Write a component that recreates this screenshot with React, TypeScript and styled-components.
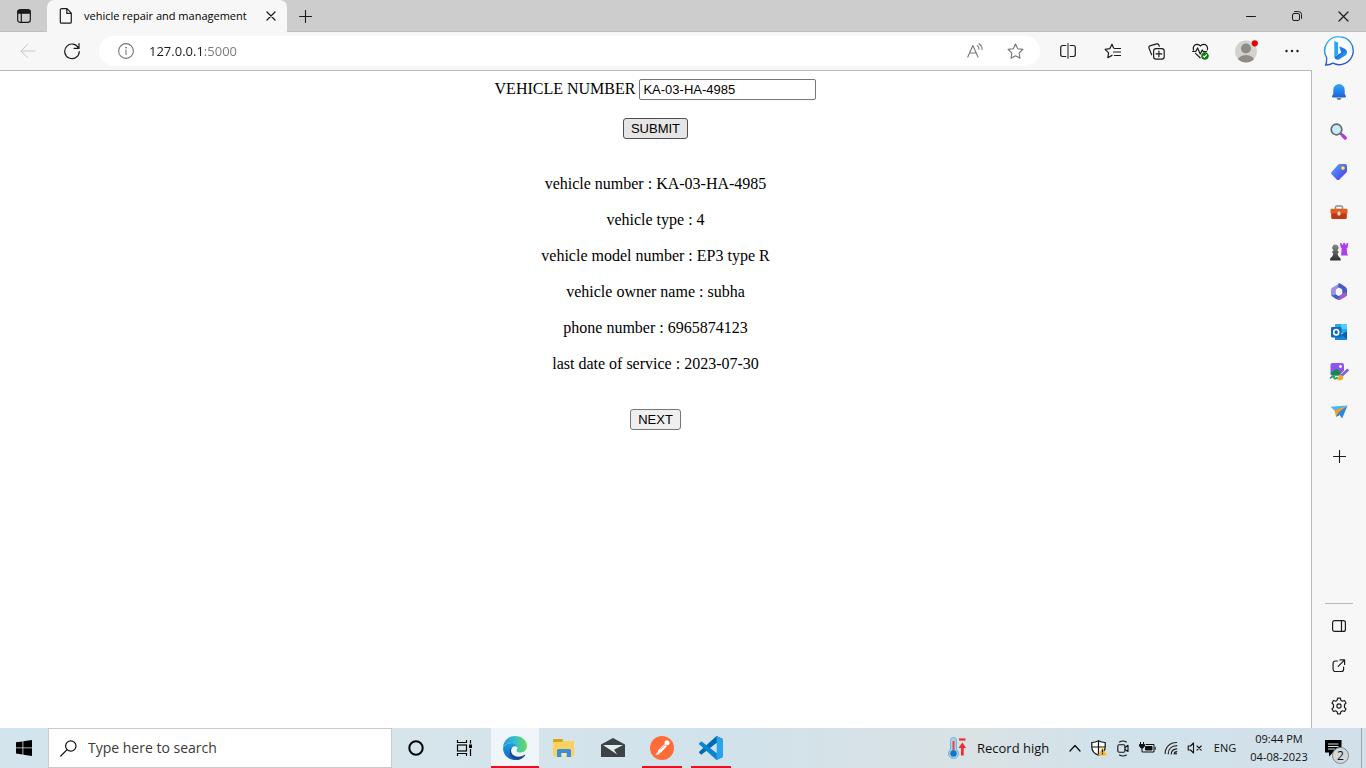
import React from "react";
import styled, { createGlobalStyle, css } from "styled-components";

const UI_FONT = '"Open Sans", "Noto Sans", sans-serif';

const GlobalStyle = createGlobalStyle`
  *, *::before, *::after { box-sizing: border-box; }
  body { margin: 0; background: #fff; color: #000; }
  button, input { margin: 0; }
  svg { display: block; flex: none; }
`;

const Desktop = styled.div`
  display: flex;
  flex-direction: column;
  min-height: 100vh;
  font-family: ${UI_FONT};
`;

/* ---------- browser chrome ---------- */

const TitleBar = styled.header`
  display: flex;
  height: 32px;
  background: #cdcdcd;
  box-shadow: inset 0 -1px 0 #bebebe;
`;

const BareButton = styled.button<{ $w: number }>`
  display: flex;
  flex: none;
  align-items: center;
  justify-content: center;
  width: ${(p) => p.$w}px;
  padding: 0;
  border: 0;
  background: transparent;
  color: #1b1b1b;
`;

const Tab = styled.div`
  display: flex;
  align-items: center;
  width: 240px;
  padding-left: 12px;
  border-radius: 7px 7px 0 0;
  background: #f7f7f7;
`;

const TabTitle = styled.span`
  flex: 1;
  padding-left: 11px;
  font-size: 11px;
  line-height: 16px;
  white-space: nowrap;
`;

const WindowControls = styled.div`
  display: flex;
  margin-left: auto;
`;

const Toolbar = styled.div`
  display: flex;
  align-items: stretch;
  height: 38px;
  padding: 0 2px 0 6px;
  background: #f7f7f7;
`;

const AddressPill = styled.div`
  display: flex;
  flex: 1;
  align-self: center;
  height: 30px;
  margin: 0 6px 0 5px;
  padding: 0 5px 0 7px;
  border-radius: 15px;
  background: #fff;
`;

const AddressInput = styled.input`
  flex: 1;
  min-width: 0;
  padding: 0 0 0 3px;
  border: 0;
  outline: 0;
  font: 13px/20px ${UI_FONT};
  color: #1b1b1b;
  background: linear-gradient(to right, #1b1b1b 56px, #767676 56px);
  background-clip: text;
  -webkit-background-clip: text;
  -webkit-text-fill-color: transparent;
`;

const Body = styled.div`
  display: flex;
  flex: 1;
`;

const Sidebar = styled.aside`
  display: flex;
  flex-direction: column;
  align-items: center;
  width: 54px;
  padding: 2px 0;
  background: #f7f7f7;
`;

const SideButton = styled.button<{ $gap?: boolean }>`
  display: flex;
  align-items: center;
  justify-content: center;
  width: 40px;
  height: 40px;
  margin-top: ${(p) => (p.$gap ? 4 : 0)}px;
  padding: 0;
  border: 0;
  background: transparent;
  color: #1b1b1b;
`;

const SideDivider = styled.hr`
  width: 28px;
  margin: auto 0 2px;
  border: 0;
  border-top: 1px solid #b9b9b9;
`;

/* ---------- web page ---------- */

const Page = styled.main`
  display: flex;
  flex: 1;
  flex-direction: column;
  align-items: center;
  padding: 8px;
  border: solid #b9b9b9;
  border-width: 1px 1px 0 0;
  background: #fff;
  font: 16px/18px "Liberation Serif", serif;
`;

const LookupForm = styled.form`
  display: flex;
  flex-direction: column;
  align-items: center;
  gap: 18px;
`;

const Field = styled.label`
  display: flex;
  align-items: baseline;
  gap: 4px;
`;

const VehicleInput = styled.input`
  width: 177px;
  height: 21px;
  padding: 1px 3px;
  border: 1px solid #767676;
  border-radius: 2px;
  background: #fff;
  color: #000;
  font: 13px/15px "Liberation Sans", sans-serif;
`;

const FormButton = styled.button<{ $hover?: boolean }>`
  height: 21px;
  padding: 0 7px;
  border: 1px solid ${(p) => (p.$hover ? "#4f4f4f" : "#767676")};
  border-radius: 3px;
  background: ${(p) => (p.$hover ? "#e5e5e5" : "#efefef")};
  color: #000;
  font: 13px/15px "Liberation Sans", sans-serif;
`;

const Details = styled.div`
  display: flex;
  flex-direction: column;
  gap: 18px;
  margin: 36px 0;
  text-align: center;
`;

const Detail = styled.p`
  margin: 0;
`;

/* ---------- taskbar ---------- */

const Taskbar = styled.footer`
  display: flex;
  height: 40px;
  background: linear-gradient(to right, #d4e4ed, #d6e5ec 30%, #d2e2ea 55%, #dae2e4 72%, #d2e2ea 80%, #d2e1e9);
`;

const SearchBox = styled.label`
  display: flex;
  align-items: center;
  gap: 11px;
  width: 344px;
  padding-left: 11px;
  border: 1px solid #c8cccf;
  background: #fff;
`;

const SearchInput = styled.input`
  flex: 1;
  min-width: 0;
  padding: 0;
  border: 0;
  outline: 0;
  background: transparent;
  font: 14px/20px ${UI_FONT};
  &::placeholder { color: #3a3a3a; opacity: 1; }
`;

const AppButton = styled.button<{ $state?: "active" | "running" }>`
  display: flex;
  align-items: center;
  justify-content: center;
  width: 48px;
  padding: 0;
  border: 0;
  background: transparent;
  ${(p) =>
    p.$state === "active" &&
    css`
      background: linear-gradient(#e81123, #e81123) bottom / 100% 2px no-repeat #eff5f8;
    `}
  ${(p) =>
    p.$state === "running" &&
    css`
      background: linear-gradient(#e81123, #e81123) bottom / 40px 2px no-repeat;
    `}
`;

const PinnedApps = styled.nav`
  display: flex;
  gap: 1px;
  margin-left: 3px;
`;

const Tray = styled.div`
  display: flex;
  align-items: stretch;
  margin-left: auto;
`;

const Weather = styled.button`
  display: flex;
  align-items: center;
  gap: 10px;
  width: 116px;
  padding: 0;
  border: 0;
  background: transparent;
  color: #111;
  font: 13px/20px ${UI_FONT};
  white-space: nowrap;
`;

const TrayText = styled.button<{ $w: number }>`
  width: ${(p) => p.$w}px;
  padding: 0;
  border: 0;
  background: transparent;
  color: #111;
  font: 11px/18px ${UI_FONT};
  white-space: nowrap;
`;

const ClockLine = styled.time`
  display: block;
`;

const Notifications = styled.button`
  position: relative;
  display: flex;
  align-items: center;
  width: 46px;
  padding: 0 0 0 10px;
  border: 0;
  background: transparent;
`;

const Badge = styled.span`
  position: absolute;
  right: 12px;
  bottom: 4px;
  width: 17px;
  height: 17px;
  border: 1px solid #7d8488;
  border-radius: 50%;
  background: #d3d8db;
  color: #111;
  font: 12px/15px ${UI_FONT};
  text-align: center;
`;

const ShowDesktop = styled.button`
  width: 5px;
  padding: 0;
  border: 0;
  border-left: 1px solid #9daab1;
  background: transparent;
`;

/* ---------- icons ---------- */

type IconProps = { w?: number; h?: number; sw?: number; color?: string; children: React.ReactNode };

const Line = ({ w = 16, h = 16, sw = 1, color = "#1b1b1b", children }: IconProps) => (
  <svg width={w} height={h} viewBox={`0 0 ${w} ${h}`} fill="none" stroke={color} strokeWidth={sw}
    strokeLinecap="round" strokeLinejoin="round" aria-hidden="true">
    {children}
  </svg>
);

const TabActionsIcon = () => (
  <Line w={14} h={14} sw={1.2}>
    <rect x="0.7" y="0.7" width="12.6" height="12.6" rx="2.4" />
    <path d="M1 1.6h12v2.6H1z" fill="#1b1b1b" />
    <path d="M4.3 4v9" />
  </Line>
);
const FileIcon = () => (
  <Line w={14} h={16} sw={1.2}>
    <path d="M2.6.7H8l4.3 4.4v8.8a1.3 1.3 0 0 1-1.3 1.3H2.6a1.3 1.3 0 0 1-1.3-1.3V2A1.3 1.3 0 0 1 2.6.7zM7.8.9v4.4h4.4" />
  </Line>
);
const CloseIcon = ({ s = 10 }: { s?: number }) => (
  <Line w={s} h={s} sw={1.2}><path d={`M1 1l${s - 2} ${s - 2}M${s - 1} 1L1 ${s - 1}`} /></Line>
);
const PlusIcon = ({ s = 13 }: { s?: number }) => (
  <Line w={s} h={s} sw={1.1}><path d={`M${s / 2} .5v${s - 1}M.5 ${s / 2}h${s - 1}`} /></Line>
);
const MinimizeIcon = () => <Line w={10} h={10}><path d="M.5 5.5h9" /></Line>;
const RestoreIcon = () => (
  <Line w={10} h={10}>
    <rect x=".5" y="2.5" width="7" height="7" rx="1.5" />
    <path d="M2.5.6h4.2A2.8 2.8 0 0 1 9.5 3.4v4" />
  </Line>
);
const BackIcon = () => <Line color="#c6c6c6"><path d="M15 8H1M7.5 1.500L1 8l6.500 6.500" /></Line>;
const ReloadIcon = () => (
  <Line w={18} h={18} sw={1.2}><path d="M15.600 6.200A7.300 7.300 0 1 0 16.300 9.500M16 1.500v4.900h-4.900" /></Line>
);
const InfoIcon = () => (
  <Line w={18} h={18} sw={1.1} color="#767676">
    <circle cx="9" cy="9" r="7.400" /><path d="M9 8v4.500" /><circle cx="9" cy="5.600" r=".4" fill="#767676" />
  </Line>
);
const ReadAloudIcon = () => (
  <Line w={16} h={16} sw={1.1} color="#767676">
    <path d="M.800 14L5.900 2.500 11 14M2.600 10h6.600M10.300 2.600c1.200.9 1.700 2.100 1.600 3.700M12 .800c2.100 1.400 3.100 3.400 3.100 5.700" />
  </Line>
);
const STAR = "M8.500 1l2.200 4.700 5.200.7-3.800 3.600.9 5.200-4.500-2.500L4 15.200l.9-5.200L1.100 6.400l5.200-.7z";
const StarIcon = () => <Line w={17} h={17} sw={1.1} color="#767676"><path d={STAR} /></Line>;
const SplitIcon = () => (
  <Line w={16} h={16} sw={1.2}>
    <path d="M5.800 2.500H2.600A1.900 1.900 0 0 0 .700 4.400v7.200a1.900 1.900 0 0 0 1.900 1.900h3.200M10.200 2.500h3.200a1.900 1.900 0 0 1 1.900 1.900v7.200a1.900 1.900 0 0 1-1.900 1.900h-3.200" />
    <path d="M8 .700v14.600" stroke="#666" strokeWidth="1.500" />
  </Line>
);
const FavoritesIcon = () => (
  <Line w={17} h={16} sw={1.2}>
    <path d="M9.600 5L8 1.200 5.900 5.600l-4.800.7 3.500 3.500-.8 4.900L8 12.400M10.500 5.500h6M9.500 9h7M10.500 12.500h6" />
  </Line>
);
const CollectionsIcon = () => (
  <Line w={17} h={17} sw={1.2}>
    <rect x="5.600" y="5.600" width="10.600" height="10.600" rx="2.400" />
    <path d="M10.900 8v5.800M8 10.900h5.800M3.600 11.800L1 5.100c-.3-1 .1-1.900 1-2.300L8.600.9c1-.3 1.800.1 2.200 1l.5 1.400" />
  </Line>
);
const HeartIcon = () => (
  <Line w={17} h={17} sw={1.2}>
    <path d="M8.400 3C6.700.8 3.700.9 2.300 2.600 1.200 3.900 1 5.600 1.600 7.200M8.400 3c1.700-2.200 4.700-2.100 6.100-.4 1.100 1.300 1.300 2.800.8 4.300M3.500 10.400l4.600 4.400M.600 8.500h3.200l1.800-3.600 2.600 6 2-4 1.100 1.700h3.200" />
    <circle cx="12.900" cy="12.900" r="3.500" fill="#107c10" stroke="#107c10" strokeWidth=".6" />
    <path d="M11.500 13.200l.9.9 2-2.300" stroke="#fff" />
  </Line>
);
const ProfileIcon = () => (
  <svg width="24" height="24" viewBox="0 0 24 24" aria-hidden="true">
    <clipPath id="avatar"><circle cx="12" cy="12.500" r="11" /></clipPath>
    <circle cx="12" cy="12.500" r="11" fill="#d4d2cf" />
    <g clipPath="url(#avatar)" fill="#8f8b87">
      <circle cx="12" cy="9.500" r="5" /><ellipse cx="12" cy="22" rx="8.500" ry="6" />
    </g>
    <circle cx="20.800" cy="4.300" r="3.100" fill="#e60000" />
  </svg>
);
const DotsIcon = () => (
  <svg width="14" height="4" viewBox="0 0 14 4" fill="#1b1b1b" aria-hidden="true">
    <circle cx="1.500" cy="2" r="1.200" /><circle cx="7" cy="2" r="1.200" /><circle cx="12.500" cy="2" r="1.200" />
  </svg>
);
const BingIcon = () => (
  <svg width="32" height="32" viewBox="0 0 32 32" aria-hidden="true">
    <defs>
      <linearGradient id="bing-ring" x1="0" y1="0" x2="0.400" y2="1"><stop stopColor="#2cc3f5" /><stop offset="1" stopColor="#2754c9" /></linearGradient>
      <linearGradient id="bing-b" x1="0" y1="0" x2="1" y2="1"><stop stopColor="#2aa5f2" /><stop offset=".5" stopColor="#1e71e8" /><stop offset="1" stopColor="#37c6ec" /></linearGradient>
    </defs>
    <path d="M16.500 1.700a14 14 0 1 1-6.600 26.500c-2.200 1.300-4.300 1.900-7.300 1.800 1-2.200 1.300-4 1-7.300A14 14 0 0 1 16.500 1.700z" fill="#fbfdff" stroke="url(#bing-ring)" strokeWidth="1.400" />
    <path d="M11.300 6l3.800 1.600v11.300l-3.800 3.100z" fill="#2ba4f1" />
    <path d="M11.300 21.800l3.800-2.200 3.200-2-1.800-4.900c-.3-.9.4-1.400 1.200-1l4.400 2.200c2.600 1.500 2.700 4.900.3 6.600l-6.400 4c-1.500.8-4.600.2-4.700-2.700z" fill="url(#bing-b)" />
  </svg>
);

const BellIcon = () => (
  <svg width="16" height="18" viewBox="0 0 16 18" aria-hidden="true">
    <defs><linearGradient id="bell" x1="0" y1="0" x2="0" y2="1"><stop stopColor="#35a9f4" /><stop offset="1" stopColor="#1b62dc" /></linearGradient></defs>
    <path d="M5.500 15h5a2.600 2.600 0 0 1-5 0z" fill="#777" />
    <path d="M8 1a5.700 5.700 0 0 1 5.700 5.700v4l1.200 2.400c.3.8-.1 1.300-.8 1.300H1.900c-.7 0-1.100-.5-.8-1.300l1.200-2.400v-4A5.700 5.700 0 0 1 8 1z" fill="url(#bell)" />
  </svg>
);
const MagnifierIcon = () => (
  <svg width="18" height="18" viewBox="0 0 18 18" aria-hidden="true">
    <path d="M10.500 10.500l2 2" stroke="#555" strokeWidth="2" />
    <path d="M12.600 12.400l2.600 2.600" stroke="#b33ae8" strokeWidth="3.400" strokeLinecap="round" />
    <circle cx="6.500" cy="6.500" r="5.300" fill="#c8ebfb" stroke="#64686c" strokeWidth="1.700" />
  </svg>
);
const TagIcon = () => (
  <svg width="18" height="18" viewBox="0 0 18 18" aria-hidden="true">
    <defs><linearGradient id="tag" x1="0" y1="0" x2="1" y2="1"><stop stopColor="#62a7ff" /><stop offset="1" stopColor="#3b35f0" /></linearGradient></defs>
    <path d="M9.700 1h5.400A2 2 0 0 1 17 3v5c0 .7-.2 1.100-.7 1.600l-6.900 6.800c-.8.8-1.900.8-2.700 0l-4.900-4.800c-.8-.8-.8-2 0-2.800L8.300 1.600c.4-.4.8-.6 1.400-.6z" fill="url(#tag)" />
    <circle cx="13" cy="5" r="1.600" fill="#fff3a0" stroke="#f2b40c" strokeWidth="1" />
  </svg>
);
const ToolboxIcon = () => (
  <svg width="18" height="16" viewBox="0 0 18 16" aria-hidden="true">
    <path d="M5.500 5V3.300c0-.8.6-1.400 1.400-1.400h4.200c.8 0 1.400.6 1.400 1.400V5" fill="none" stroke="#8d8d8d" strokeWidth="1.500" />
    <rect x=".5" y="4.800" width="17" height="5" rx="1" fill="#e85a1c" />
    <path d="M1.200 9.200h15.600v4.300a1.500 1.500 0 0 1-1.500 1.500H2.700a1.500 1.500 0 0 1-1.500-1.500z" fill="#c2390f" />
    <rect x="7.500" y="7.500" width="3" height="4" rx="1.200" fill="#d8dde0" />
  </svg>
);
const ChessIcon = () => (
  <svg width="20" height="20" viewBox="0 0 20 20" aria-hidden="true">
    <defs><linearGradient id="pawn" x1="0" y1="0" x2="0" y2="1"><stop stopColor="#8a8a8a" /><stop offset="1" stopColor="#303030" /></linearGradient></defs>
    <path d="M11 1h1.700v1.600h1.500V1h1.900v1.600h1.500V1h1.700l-.6 4.400-1 .8.4 5.200 1 2.200h-7l.6-7.400-1-.8z" fill="#b13df0" />
    <path d="M6.400 2.500a3.200 3.200 0 0 1 2.100 5.600v1h1V11H8.600c.1 2.200.8 3.600 2.200 4.600.6.5.9 1.200.9 2.900H1.100c0-1.700.3-2.400.9-2.900 1.400-1 2.100-2.400 2.200-4.600h-.9V9.100h1v-1a3.200 3.200 0 0 1 2.100-5.600z" fill="url(#pawn)" />
  </svg>
);
const M365Icon = () => (
  <svg width="18" height="18" viewBox="0 0 18 18" aria-hidden="true">
    <path d="M9.500.500L3 4.200C1.700 4.900 1 5.900 1 7.300v4.200c.3 1.700 2.100 2.400 3.600 1.500l1.300-.8V7.600c0-.9.400-1.500 1.100-1.900L12.500 2.200z" fill="#9a90e4" />
    <path d="M10.200.600l4.700 2.800C16.300 4.200 17 5.300 17 7v4.500c0 .7-.2 1.200-.6 1.600l-4.200-2V7.600c0-.8-.3-1.400-1-1.800L8.200 4.200V1.600C8.200.500 9.300 0 10.200.600z" fill="#4a5cc4" />
    <path d="M17 11c0 1.300-.6 2.300-1.900 3l-4.100 2.500c-1.300.8-2.700.8-4 0l-2.400-1.500 5.200-2.800 4.200-2.400c1.300-.8 3-.3 3 1.200z" fill="#a25bd8" />
    <path d="M1.200 11.800c.3 1 .9 1.700 1.800 2.200l3.300 2c1.300-.1 3.400-1.500 4-3l-1.300.2-3.400-2c-1.500 1.100-3.500 1.500-4.400.600z" fill="#3565c4" />
    <path d="M9 5.500l3.100 1.800v3.500L9 12.600l-3.100-1.800V7.300z" fill="#f7f7f7" />
  </svg>
);
const OutlookIcon = () => (
  <svg width="18" height="18" viewBox="0 0 18 18" aria-hidden="true">
    <path d="M6 1h10a1 1 0 0 1 1 1v8H5V2a1 1 0 0 1 1-1z" fill="#28a8ea" />
    <path d="M11 1h5a1 1 0 0 1 1 1v4h-6z" fill="#50d0f8" />
    <path d="M5 8l6 3.500L17 8v8a1 1 0 0 1-1 1H5z" fill="#1686d9" />
    <path d="M17 8.500v7.500l-6-4.200z" fill="#0a5fa8" />
    <rect x="1" y="4" width="10.500" height="10.500" rx="1" fill="#0f6cbd" />
    <ellipse cx="6.200" cy="9.200" rx="2.500" ry="2.700" fill="none" stroke="#fff" strokeWidth="1.600" />
  </svg>
);
const DesignerIcon = () => (
  <svg width="20" height="20" viewBox="0 0 20 20" aria-hidden="true">
    <rect x="1.500" y="1" width="13.500" height="12.500" rx="2" fill="#9054ee" />
    <path d="M1.800 11l4.200-3.500c.8-.7 1.600-.7 2.400 0l5 4.500-1 1.500H3.600c-1 0-1.800-.8-1.800-1.800z" fill="#148a50" />
    <circle cx="11.500" cy="4.500" r="1.400" fill="#fff" />
    <path d="M1.500 16c2-2 4-2 3.700-.6-.3 1.500 1.200 1.600 3.300.4" fill="none" stroke="#1aa05d" strokeWidth="1.700" strokeLinecap="round" />
    <path d="M18.600 8L13 13.300" stroke="#fff" strokeWidth="4" />
    <path d="M18.400 8.200L13 13.300" stroke="#7c62e8" strokeWidth="2.800" strokeLinecap="round" />
    <path d="M11.300 12.300l3 2.900c0 2.600-2.800 3.600-6.300 3 1.400-.9.800-4.800 3.300-5.900z" fill="#f5a623" />
  </svg>
);
const DropIcon = () => (
  <svg width="18" height="16" viewBox="0 0 18 16" aria-hidden="true">
    <path d="M17.500 1.500L.500 2.800 5 7z" fill="#45b6f6" />
    <path d="M17.500 1.500L4.500 6.500l1.700 6.500 2.300-3.500z" fill="#f29d1f" />
    <path d="M17.500 1.500L8 8.800l4.200 5.700z" fill="#2489e6" />
    <path d="M8.200 9.300L6.200 13l3.200-2z" fill="#1263b8" />
  </svg>
);
const PanelIcon = () => (
  <Line w={14} h={12} sw={1.2}><rect x=".600" y=".600" width="12.800" height="10.800" rx="2" /><path d="M9.500 1v10" /></Line>
);
const OpenIcon = () => (
  <Line w={14} h={14} sw={1.2}>
    <path d="M5.500 2H3.400A2.300 2.300 0 0 0 1.100 4.300v5.900a2.300 2.300 0 0 0 2.300 2.300h5.900a2.300 2.300 0 0 0 2.300-2.300V8M8 .900h4.600v4.600M12.400 1.100L6.200 7.300" />
  </Line>
);
const GearIcon = () => (
  <Line w={18} h={18} sw={1.2}>
    <circle cx="9" cy="9" r="2.100" />
    <path d="M7.600 1.200h2.800l.5 2.100 1.500.9 2.100-.7 1.500 2.500-1.500 1.600v2.800l1.500 1.600-1.500 2.500-2.100-.7-1.500.9-.5 2.100H7.600l-.5-2.100-1.500-.9-2.100.7L2 12l1.500-1.600V7.600L2 6l1.500-2.500 2.100.7 1.500-.9z" />
  </Line>
);

const WindowsIcon = () => (
  <svg width="16" height="16" viewBox="0 0 16 16" aria-hidden="true">
    <path d="M0 2.300l6.500-.9v6.100H0zM7.300 1.300L16 0v7.500H7.300zM0 8.300h6.500v6.200L0 13.600zM7.300 8.300H16V16l-8.700-1.300z" />
  </svg>
);
const SearchIcon = () => (
  <Line w={17} h={17} sw={1.2} color="#111"><circle cx="10.800" cy="6" r="5.200" /><path d="M7.100 9.700L.800 16" /></Line>
);
const CortanaIcon = () => <Line w={16} h={16} sw={2} color="#000"><circle cx="8" cy="8" r="6.700" /></Line>;
const TaskViewIcon = () => (
  <svg width="17" height="16" viewBox="0 0 17 16" fill="none" stroke="#000" strokeWidth="1.200" aria-hidden="true">
    <path d="M1.500 0v2.500h9V0M1.500 16v-2.500h9V16M14.500 0v3.500M14.500 9v7" />
    <rect x="1.500" y="5" width="9" height="6" />
    <path d="M13 4.500h3v3.500h-3z" fill="#000" stroke="none" />
  </svg>
);
const EdgeIcon = () => (
  <svg width="24" height="24" viewBox="0 0 24 24" aria-hidden="true">
    <defs>
      <linearGradient id="edge-top" x1="0" y1="0.500" x2="1" y2="0.500"><stop stopColor="#2496dd" /><stop offset=".5" stopColor="#34c1cf" /><stop offset="1" stopColor="#69dc52" /></linearGradient>
      <linearGradient id="edge-low" x1="0" y1="0" x2="0" y2="1"><stop stopColor="#1fa0e0" /><stop offset="1" stopColor="#1261bd" /></linearGradient>
    </defs>
    <path d="M0 11.500C.500 5 5.600 0 12 0c7 0 12 4.800 12 10.300 0 3.700-2.900 6.200-6.500 6.200-2.600 0-4-1-4-1.800 0-.6 1-1.200 1-2.900 0-2.600-2.600-4.900-6-4.900C4.500 6.900 1.400 8.700 0 11.500z" fill="url(#edge-top)" />
    <path d="M0 12.200C.800 9 4.400 6.900 8.500 6.900c3.400 0 6 2.300 6 4.900-1-1.400-2.600-1.700-4-1.200-3 1.100-3.700 6.600-.2 10 1.300 1.300 2.700 2.400 4.700 3A12 12 0 0 1 0 12.200z" fill="url(#edge-low)" />
    <path d="M8.800 11.800c-1.800 3.300-.3 7.200 3.500 8.400 3.200 1 6.500.2 8.900-1.300.8-.4 1.300.2.800.9-1.800 2.400-4.300 3.700-7 4.100C9.500 23.300 6.500 19.500 6.800 16c.2-1.900 1-3.300 2-4.200z" fill="#114a8b" />
  </svg>
);
const ExplorerIcon = () => (
  <svg width="22" height="20" viewBox="0 0 22 20" aria-hidden="true">
    <path d="M0 2a1 1 0 0 1 1-1h7.500l2 2H21v15.500H0z" fill="#fbd25f" />
    <path d="M0 2a1 1 0 0 1 1-1h8l1.200 1.200L8.800 4H0z" fill="#d9a413" />
    <path d="M4 19v-6.500c0-.8.7-1.500 1.500-1.500h11c.8 0 1.500.7 1.500 1.500V19h-4.500v-4h-5v4z" fill="#3b8fd9" />
    <path d="M8.500 15h5v3.500h-5z" fill="#fbe9a8" />
  </svg>
);
const MailIcon = () => (
  <svg width="24" height="20" viewBox="0 0 24 20" aria-hidden="true">
    <path d="M0 6.500L12 0l12 6.500V19H0z" fill="#3b4347" />
    <path d="M2 7h20l-9 4.800 3.200 4.700z" fill="#e4edf2" />
  </svg>
);
const PostmanIcon = () => (
  <svg width="24" height="24" viewBox="0 0 24 24" aria-hidden="true">
    <circle cx="12" cy="12" r="12" fill="#ff6c37" />
    <circle cx="17" cy="6.700" r="2.500" fill="#fff" />
    <path d="M14.500 8l2.400 2.200-6 6.300-4 1.200 1.500-3.700z" fill="#fff" />
    <path d="M8.600 15.800l-3.600 3.400 4-.9 1.300-1.900z" fill="#fff" />
    <path d="M10.300 13.600l4.800-4.700" stroke="#ff6c37" strokeWidth=".6" />
  </svg>
);
const VsCodeIcon = () => (
  <svg width="24" height="24" viewBox="0 0 24 24" aria-hidden="true">
    <path d="M17.500 0L24 3v3l-6.500 1L3 18.300c-.4.300-.9.300-1.300 0L.400 17.100c-.5-.5-.5-1.200 0-1.600z" fill="#0069b3" />
    <path d="M17.500 24l6.500-3v-3l-6.500-1L3 5.700c-.4-.3-.9-.3-1.300 0L.400 6.900c-.5.5-.5 1.200 0 1.600z" fill="#0a86d1" />
    <path d="M17.500 0L24 3v18l-6.500 3c-.8 0-.3-.4.200-1V1C17.200.400 16.700 0 17.500 0z" fill="#2aa3ee" />
  </svg>
);
const ThermometerIcon = () => (
  <svg width="20" height="24" viewBox="0 0 20 24" aria-hidden="true">
    <path d="M3.500 4.500a3 3 0 0 1 6 0v9a5 5 0 1 1-6 0z" fill="#a9d3ee" stroke="#70b0dc" />
    <path d="M6.500 5v11" stroke="#e8424a" strokeWidth="2" />
    <circle cx="6.500" cy="17.500" r="3.200" fill="#1177c4" />
    <path d="M12 3.500h6.500" stroke="#f22c2c" strokeWidth="2.200" />
    <path d="M15.300 6.500l3.900 5.500h-2.500v7.500h-2.700V12h-2.500z" fill="#f22c2c" />
  </svg>
);
const ChevronIcon = () => <Line w={12} h={8} sw={1.3} color="#111"><path d="M1 7l5-5.500L11 7" /></Line>;
const ShieldIcon = () => (
  <svg width="16" height="16" viewBox="0 0 16 16" aria-hidden="true">
    <path d="M7.500.800c2 1.200 4.200 1.700 6.700 1.700v4.500c0 4-2.500 6.700-6.700 8.300C3.300 13.700.800 11 .800 7V2.500c2.500 0 4.700-.5 6.700-1.700z" fill="#fff" stroke="#111" strokeWidth="1.200" />
    <path d="M7.500 1v14M1 7h13" stroke="#111" strokeWidth="1.200" />
    <path d="M11.500 7l4.500 8.500H7z" fill="#fdbf1c" />
    <path d="M11.500 9.500v3M11.500 13.300v1.200" stroke="#111" strokeWidth="1.200" />
  </svg>
);
const MeetIcon = () => (
  <Line w={12} h={17} sw={1.1} color="#111">
    <rect x=".800" y="4.700" width="7.200" height="7.500" rx="1.500" />
    <path d="M8 7.500l3-2.200v6.200L8 9.500M2.500 1.900c2-1.100 4.800-1.100 6.800 0M2.500 15.100c2 1.100 4.800 1.100 6.800 0" />
  </Line>
);
const BatteryIcon = () => (
  <svg width="17" height="12" viewBox="0 0 17 12" fill="none" stroke="#111" aria-hidden="true">
    <path d="M6.500 2.500h8.500v7.500H4.500M16.200 4.800v3M1.500 0v2M4.500 0v2M3 6v4h1.500" />
    <path d="M.500 2.500h5v1.800L3.700 6H2.300L.500 4.300z" fill="#111" />
    <path d="M6.500 4.500h6.500v3.500H6.500z" fill="#111" />
  </svg>
);
const WifiIcon = () => (
  <Line w={14} h={14} sw={1.2} color="#222">
    <path d="M1.200 12.500C1.200 6 6 1.500 12.600 1.500M4.200 12.800c.2-4.800 3.600-8 8.600-8.200M7.200 13c.2-3 2.400-5 5.600-5.200" />
    <path d="M10.200 13c.1-1.400 1.100-2.300 2.500-2.400" /><circle cx="12" cy="12.400" r="1" fill="#222" stroke="none" />
  </Line>
);
const MuteIcon = () => (
  <Line w={16} h={14} sw={1.1} color="#111"><path d="M1.200 5h2.300L6.500 2v10L3.500 9H1.200zM10 5l4.200 4.200M14.200 5L10 9.200" /></Line>
);
const NoteIcon = () => (
  <svg width="17" height="17" viewBox="0 0 17 17" aria-hidden="true">
    <path d="M0 0h16.500v12.500H8l-4 4v-4H0z" fill="#000" />
    <path d="M3 4h10.500M3 6.500h10.500M3 9h7" stroke="#d2e1e9" strokeWidth="1" />
  </svg>
);

/* ---------- data ---------- */

const details: [string, string][] = [
  ["vehicle number", "KA-03-HA-4985"],
  ["vehicle type", "4"],
  ["vehicle model number", "EP3 type R"],
  ["vehicle owner name", "subha"],
  ["phone number", "6965874123"],
  ["last date of service", "2023-07-30"],
];

const sideApps: [string, React.ReactNode][] = [
  ["Notifications", <BellIcon />],
  ["Search", <MagnifierIcon />],
  ["Shopping", <TagIcon />],
  ["Tools", <ToolboxIcon />],
  ["Games", <ChessIcon />],
  ["Microsoft 365", <M365Icon />],
  ["Outlook", <OutlookIcon />],
  ["Image Creator", <DesignerIcon />],
  ["Drop", <DropIcon />],
];

const sideTools: [string, React.ReactNode][] = [
  ["Hide sidebar", <PanelIcon />],
  ["Open in new window", <OpenIcon />],
  ["Settings", <GearIcon />],
];

const browserTools: [string, React.ReactNode, number][] = [
  ["Split screen", <SplitIcon />, 44],
  ["Favorites", <FavoritesIcon />, 44],
  ["Collections", <CollectionsIcon />, 44],
  ["Browser essentials", <HeartIcon />, 44],
  ["Profile", <ProfileIcon />, 48],
  ["Settings and more", <DotsIcon />, 44],
  ["Bing Chat", <BingIcon />, 50],
];

const pinned: [string, React.ReactNode, ("active" | "running")?][] = [
  ["Microsoft Edge", <EdgeIcon />, "active"],
  ["File Explorer", <ExplorerIcon />],
  ["Mail", <MailIcon />],
  ["Postman", <PostmanIcon />, "running"],
  ["Visual Studio Code", <VsCodeIcon />, "running"],
];

const trayIcons: [string, React.ReactNode][] = [
  ["Show hidden icons", <ChevronIcon />],
  ["Windows Security", <ShieldIcon />],
  ["Meet Now", <MeetIcon />],
  ["Battery", <BatteryIcon />],
  ["Network", <WifiIcon />],
  ["Volume", <MuteIcon />],
];

export default function App() {
  return (
    <Desktop>
      <GlobalStyle />
      <TitleBar>
        <BareButton $w={47} aria-label="Tab actions"><TabActionsIcon /></BareButton>
        <Tab>
          <FileIcon />
          <TabTitle>vehicle repair and management</TabTitle>
          <BareButton $w={32} aria-label="Close tab"><CloseIcon /></BareButton>
        </Tab>
        <BareButton $w={36} aria-label="New tab"><PlusIcon /></BareButton>
        <WindowControls>
          <BareButton $w={46} aria-label="Minimize"><MinimizeIcon /></BareButton>
          <BareButton $w={46} aria-label="Restore"><RestoreIcon /></BareButton>
          <BareButton $w={46} aria-label="Close"><CloseIcon s={11} /></BareButton>
        </WindowControls>
      </TitleBar>
      <Toolbar>
        <BareButton $w={44} aria-label="Back"><BackIcon /></BareButton>
        <BareButton $w={44} aria-label="Refresh"><ReloadIcon /></BareButton>
        <AddressPill>
          <BareButton $w={40} aria-label="Site information"><InfoIcon /></BareButton>
          <AddressInput aria-label="Address" defaultValue="127.0.0.1:5000" />
          <BareButton $w={40} aria-label="Read aloud"><ReadAloudIcon /></BareButton>
          <BareButton $w={40} aria-label="Add to favorites"><StarIcon /></BareButton>
        </AddressPill>
        {browserTools.map(([label, icon, w]) => (
          <BareButton key={label} $w={w} aria-label={label}>{icon}</BareButton>
        ))}
      </Toolbar>
      <Body>
        <Page>
          <LookupForm onSubmit={(e) => e.preventDefault()}>
            <Field>
              VEHICLE NUMBER
              <VehicleInput defaultValue="KA-03-HA-4985" />
            </Field>
            <FormButton type="submit" $hover>SUBMIT</FormButton>
          </LookupForm>
          <Details>
            {details.map(([name, value]) => (
              <Detail key={name}>{name} : {value}</Detail>
            ))}
          </Details>
          <FormButton type="button">NEXT</FormButton>
        </Page>
        <Sidebar>
          {sideApps.map(([label, icon]) => (
            <SideButton key={label} aria-label={label}>{icon}</SideButton>
          ))}
          <SideButton $gap aria-label="Customize sidebar"><PlusIcon /></SideButton>
          <SideDivider />
          {sideTools.map(([label, icon]) => (
            <SideButton key={label} aria-label={label}>{icon}</SideButton>
          ))}
        </Sidebar>
      </Body>
      <Taskbar>
        <BareButton $w={48} aria-label="Start"><WindowsIcon /></BareButton>
        <SearchBox>
          <SearchIcon />
          <SearchInput placeholder="Type here to search" aria-label="Type here to search" />
        </SearchBox>
        <AppButton aria-label="Cortana"><CortanaIcon /></AppButton>
        <AppButton aria-label="Task view"><TaskViewIcon /></AppButton>
        <PinnedApps>
          {pinned.map(([label, icon, state]) => (
            <AppButton key={label} $state={state} aria-label={label}>{icon}</AppButton>
          ))}
        </PinnedApps>
        <Tray>
          <Weather><ThermometerIcon />Record high</Weather>
          {trayIcons.map(([label, icon]) => (
            <BareButton key={label} $w={24} aria-label={label}>{icon}</BareButton>
          ))}
          <TrayText $w={36}>ENG</TrayText>
          <TrayText $w={72}>
            <ClockLine>09:44 PM</ClockLine>
            <ClockLine>04-08-2023</ClockLine>
          </TrayText>
          <Notifications aria-label="2 notifications">
            <NoteIcon />
            <Badge>2</Badge>
          </Notifications>
          <ShowDesktop aria-label="Show desktop" />
        </Tray>
      </Taskbar>
    </Desktop>
  );
}
